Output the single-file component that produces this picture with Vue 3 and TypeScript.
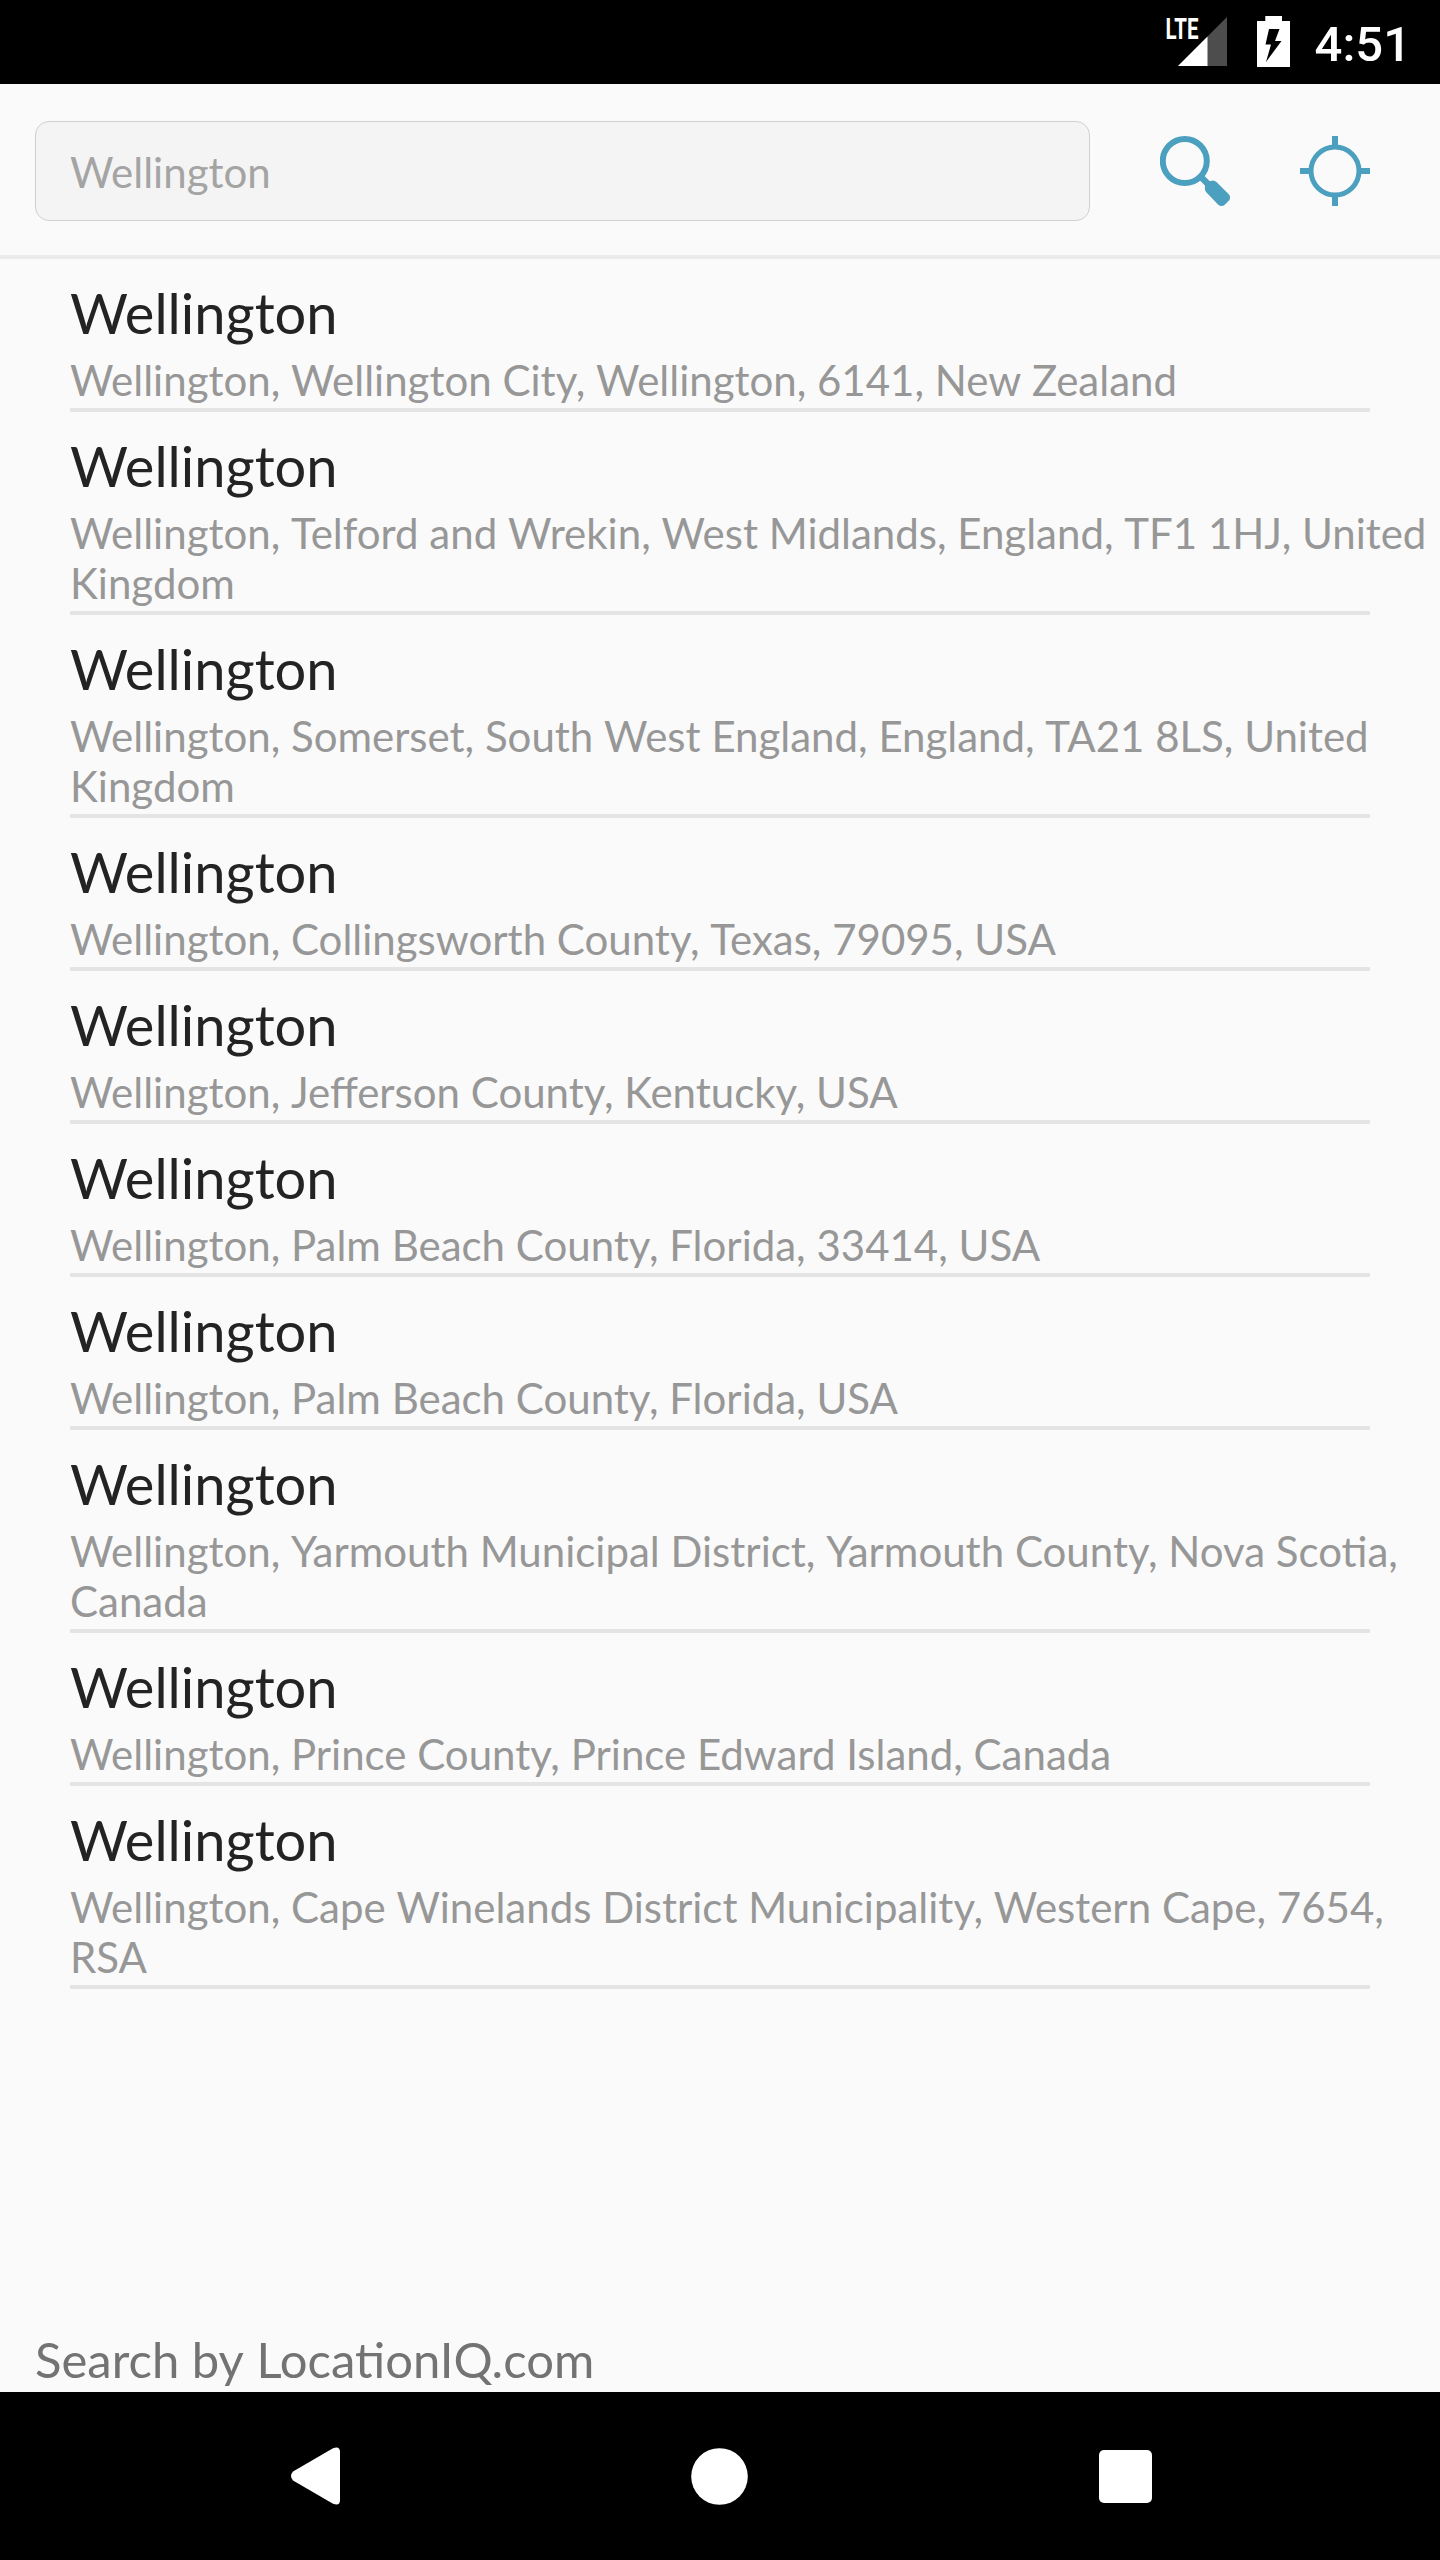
<script setup lang="ts">
import { ref } from 'vue'

interface Place {
  name: string
  words: string[]
}

const query = ref<string>('')

const places: Place[] = [
  'Wellington, Wellington City, Wellington, 6141, New Zealand',
  'Wellington, Telford and Wrekin, West Midlands, England, TF1 1HJ, United Kingdom',
  'Wellington, Somerset, South West England, England, TA21 8LS, United Kingdom',
  'Wellington, Collingsworth County, Texas, 79095, USA',
  'Wellington, Jefferson County, Kentucky, USA',
  'Wellington, Palm Beach County, Florida, 33414, USA',
  'Wellington, Palm Beach County, Florida, USA',
  'Wellington, Yarmouth Municipal District, Yarmouth County, Nova Scotia, Canada',
  'Wellington, Prince County, Prince Edward Island, Canada',
  'Wellington, Cape Winelands District Municipality, Western Cape, 7654, RSA',
].map((address) => ({ name: 'Wellington', words: address.split(' ') }))

const credit: string[] = 'Search by LocationIQ.com'.split(' ')
</script>

<template>
  <div class="screen">
    <header class="status">
      <svg class="signal" width="63" height="84" viewBox="0 0 63 84">
        <path d="M12 66L61 17V66Z" fill="#4d4d4d" />
        <path d="M12 66L41.5 36.5V66Z" fill="#fff" />
        <text x="-0.5" y="39" textLength="33" lengthAdjust="spacingAndGlyphs">LTE</text>
      </svg>
      <svg class="battery" width="33" height="51" viewBox="0 0 33 51">
        <path
          d="M8.3 0H25V5H33V51H0V5H8.3ZM12 13L8.5 28.5H14L9 46L24.5 25H18L22.5 13Z"
          fill="#fff"
          fill-rule="evenodd"
        />
      </svg>
      <span class="clock">4:51</span>
    </header>

    <form class="search" @submit.prevent>
      <input v-model="query" class="field" type="text" placeholder="Wellington" />
      <button class="icon" type="submit" aria-label="Search">
        <svg width="70" height="70" viewBox="0 0 70 70">
          <circle cx="24.8" cy="25" r="22" fill="none" stroke="#4b9fbf" stroke-width="6" />
          <path d="M42 42L50 50" stroke="#4b9fbf" stroke-width="6.5" />
          <path
            d="M45 49Q45 46.5 47.5 46.5L50.5 45Q54 43.5 56.5 46L68.5 58Q71.5 61 69 64.5L65 68.5Q61.5 71.5 58 68.5L46.5 56.5Q44.5 54.5 45 52Z"
            fill="#4b9fbf"
          />
        </svg>
      </button>
      <button class="icon" type="button" aria-label="Use current location">
        <svg width="70" height="70" viewBox="0 0 70 70" fill="none" stroke="#4b9fbf">
          <circle cx="35" cy="35" r="24" stroke-width="5" />
          <path d="M35 0V10M35 60V70M0 35H10M60 35H70" stroke-width="6" />
        </svg>
      </button>
    </form>

    <main class="results">
      <ul class="list">
        <li v-for="(place, i) in places" :key="i" class="place">
          <div class="name">{{ place.name }}</div>
          <div class="address">
            <template v-for="(word, w) in place.words" :key="w"><span class="word">{{ word }}</span>{{ ' ' }}</template>
          </div>
          <div class="rule"></div>
        </li>
      </ul>
      <p class="credit">
        <template v-for="word in credit" :key="word"><span class="word">{{ word }}</span>{{ ' ' }}</template>
      </p>
    </main>

    <nav class="nav">
      <svg width="50" height="58" viewBox="0 0 50 58">
        <path
          d="M2 24.5L42 1.2Q49 -1.5 49 5V53Q49 59.5 42 56.8L2 33.5Q-2 29 2 24.5Z"
          fill="#fff"
        />
      </svg>
      <svg class="home" width="57" height="57" viewBox="0 0 57 57">
        <circle cx="28.5" cy="28.5" r="28.3" fill="#fff" />
      </svg>
      <svg class="recent" width="53" height="53" viewBox="0 0 53 53">
        <rect width="53" height="53" rx="5" fill="#fff" />
      </svg>
    </nav>
  </div>
</template>

<style>
body {
  margin: 0;
  background: #fafafa;
}
</style>

<style scoped>
.screen {
  display: flex;
  flex-direction: column;
  width: 1440px;
  height: 2560px;
  overflow: hidden;
  background: #fafafa;
  font-family: Lato, sans-serif;
}

.status {
  display: flex;
  justify-content: flex-end;
  height: 84px;
  padding-right: 29px;
  background: #000;
  color: #fff;
}

.signal {
  margin-right: 28px;
}

.signal text {
  fill: #fff;
  font: 700 29px Roboto, sans-serif;
}

.battery {
  margin: 16px 25px 0 0;
}

.clock {
  padding-top: 16px;
  font: 500 49px/57px Roboto, sans-serif;
}

.search {
  display: flex;
  box-sizing: border-box;
  height: 175px;
  margin: 0;
  padding: 37px 35px 0;
  border-bottom: 4px solid #eaeaea;
}

.field {
  box-sizing: border-box;
  width: 1055px;
  height: 100px;
  padding: 2px 34px 0;
  border: 1px solid #d0d0d0;
  border-radius: 14px;
  background: #f4f4f4;
  color: #212121;
  font: 42px Lato, sans-serif;
  outline: none;
}

.field::placeholder {
  color: #a4a4a4;
  opacity: 1;
}

.icon {
  display: block;
  width: 70px;
  height: 70px;
  margin: 15px 0 0 70px;
  padding: 0;
  border: 0;
  background: none;
}

.icon svg {
  display: block;
}

.results {
  display: flex;
  flex: 1;
  flex-direction: column;
  justify-content: space-between;
}

.list {
  margin: 0;
  padding: 0;
  list-style: none;
}

.place {
  padding: 20px 0 0 70px;
}

.name {
  color: #232323;
  font-size: 56px;
  line-height: 67px;
}

.address {
  padding: 9px 0 3px;
  color: #979797;
  font-size: 42px;
  line-height: 50px;
}

/* Each word is shaped on its own, so no kerning is applied across spaces. */
.word {
  display: inline-block;
}

.rule {
  height: 4px;
  margin-right: 70px;
  border-radius: 1px;
  background: #e4e4e4;
}

.credit {
  margin: 0 0 3px 35px;
  color: #737373;
  font-size: 49px;
  line-height: 59px;
}

.nav {
  display: flex;
  align-items: center;
  justify-content: space-between;
  box-sizing: border-box;
  height: 168px;
  padding: 0 288px 0 291px;
  background: #000;
}

.home {
  margin-right: 2px;
}

.recent {
  margin-top: 1px;
}
</style>
